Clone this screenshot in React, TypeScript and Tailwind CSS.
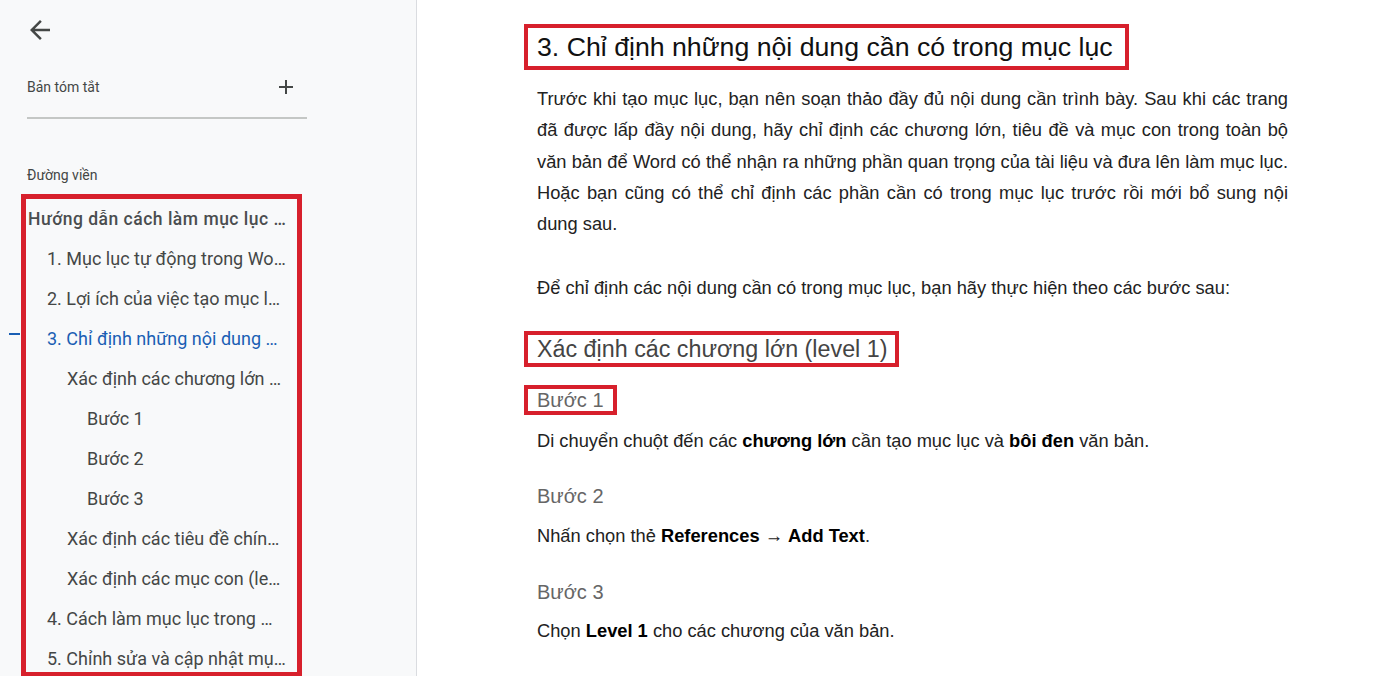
const outline = [
  { text: "Hướng dẫn cách làm mục lục trong Word tự động", level: 0 },
  { text: "1. Mục lục tự động trong Word là gì?", level: 1 },
  { text: "2. Lợi ích của việc tạo mục lục tự động", level: 1 },
  { text: "3. Chỉ định những nội dung cần có trong mục lục", level: 1, active: true },
  { text: "Xác định các chương lớn (level 1)", level: 2 },
  { text: "Bước 1", level: 3 },
  { text: "Bước 2", level: 3 },
  { text: "Bước 3", level: 3 },
  { text: "Xác định các tiêu đề chính (level 2)", level: 2 },
  { text: "Xác định các mục con (level 3)", level: 2 },
  { text: "4. Cách làm mục lục trong Word", level: 1 },
  { text: "5. Chỉnh sửa và cập nhật mục lục", level: 1 },
];

const indent = ["pl-[2px]", "pl-[21px] pb-[2px]", "pl-[41px] pb-[2px]", "pl-[61px] pb-[2px]"];

function Sidebar() {
  return (
    <aside className="w-[417px] h-[676px] shrink-0 bg-[#f8f9fa] border-r border-[#dadce0] overflow-hidden font-['Roboto',sans-serif] text-[#444746]">
      <div className="pt-[15px] pl-[25px]">
        <svg width="30" height="30" viewBox="0 0 24 24" fill="#444746">
          <path d="M20 11H7.83l5.59-5.59L12 4l-8 8 8 8 1.41-1.41L7.83 13H20v-2z" />
        </svg>
      </div>
      <div className="mt-[32px] ml-[27px] w-[280px] flex items-center justify-between h-[20px]">
        <span className="text-[14px]">Bản tóm tắt</span>
        <svg width="24" height="24" viewBox="0 0 24 24" fill="#444746" className="mr-[9px]">
          <path d="M19 13h-6v6h-2v-6H5v-2h6V5h2v6h6v2z" />
        </svg>
      </div>
      <div className="mt-[20px] ml-[27px] w-[280px] h-[2px] bg-[#c4c7c5]" />
      <div className="mt-[46px] ml-[27px] text-[14px] leading-[20px]">Đường viền</div>
      <div className="relative mt-[9px] ml-[21px] w-[281px] h-[483px] border-[5px] border-[#d7202c]">
        <div className="h-full overflow-hidden pr-[10.5px]">
          {outline.map((item, i) => (
            <div
              key={i}
              className={`h-[40px] flex items-center ${indent[item.level]}`}
            >
              <span
                className={`truncate ${
                  item.level === 0
                    ? "text-[17.5px] font-medium tracking-[0.5px] text-[#4a4d4f]"
                    : "text-[18px]"
                } ${item.active ? "text-[#1a5fb4]" : ""}`}
              >
                {item.text}
              </span>
            </div>
          ))}
        </div>
        <div className="absolute left-[-17px] top-[134px] w-[11px] h-[2px] bg-[#1a5fb4]" />
      </div>
    </aside>
  );
}

function Step({ title }: { title: string }) {
  return (
    <div className="inline-block h-[30px] px-[9px] border-4 border-transparent text-[20px] leading-[22px] text-[#666]">
      {title}
    </div>
  );
}

export default function App() {
  return (
    <div className="flex w-[1392px] h-[676px] bg-white overflow-hidden">
      <Sidebar />
      <main className="flex-1 pt-[24px] pl-[107px] font-['Liberation_Sans',Arial,sans-serif] text-[#222]">
        <div className="inline-block h-[46px] border-4 border-[#d7202c] pl-[9px] pr-[12px] text-[26.7px] leading-[38px] text-[#111]">
          3. Chỉ định những nội dung cần có trong mục lục
        </div>
        <p className="mt-[13px] ml-[13px] w-[751px] text-justify text-[18.3px] leading-[31.3px]">
          Trước khi tạo mục lục, bạn nên soạn thảo đầy đủ nội dung cần trình bày. Sau khi các trang đã được lấp đầy nội dung, hãy chỉ định các chương lớn, tiêu đề và mục con trong toàn bộ văn bản để Word có thể nhận ra những phần quan trọng của tài liệu và đưa lên làm mục lục. Hoặc bạn cũng có thể chỉ định các phần cần có trong mục lục trước rồi mới bổ sung nội dung sau.
        </p>
        <p className="mt-[33px] ml-[13px] text-[18.3px] leading-[31.3px]">
          Để chỉ định các nội dung cần có trong mục lục, bạn hãy thực hiện theo các bước sau:
        </p>
        <div className="mt-[27px]">
          <div className="inline-block h-[36px] border-4 border-[#d7202c] pl-[9px] pr-[8px] text-[23.3px] leading-[28px] text-[#444]">
            Xác định các chương lớn (level 1)
          </div>
        </div>
        <div className="mt-[18px]">
          <div className="inline-block h-[30px] pl-[9px] pr-[9px] border-4 border-[#d7202c] text-[20px] leading-[22px] text-[#666]">
            Bước 1
          </div>
        </div>
        <p className="mt-[10px] ml-[13px] text-[18.3px] leading-[31.3px]">
          Di chuyển chuột đến các <b className="text-black">chương lớn</b> cần tạo mục lục và <b className="text-black">bôi đen</b> văn bản.
        </p>
        <div className="mt-[25px]">
          <Step title="Bước 2" />
        </div>
        <p className="mt-[9px] ml-[13px] text-[18.3px] leading-[31.3px]">
          Nhấn chọn thẻ <b className="text-black">References</b> → <b className="text-black">Add Text</b>.
        </p>
        <div className="mt-[26px]">
          <Step title="Bước 3" />
        </div>
        <p className="mt-[8px] ml-[13px] text-[18.3px] leading-[31.3px]">
          Chọn <b className="text-black">Level 1</b> cho các chương của văn bản.
        </p>
      </main>
    </div>
  );
}
